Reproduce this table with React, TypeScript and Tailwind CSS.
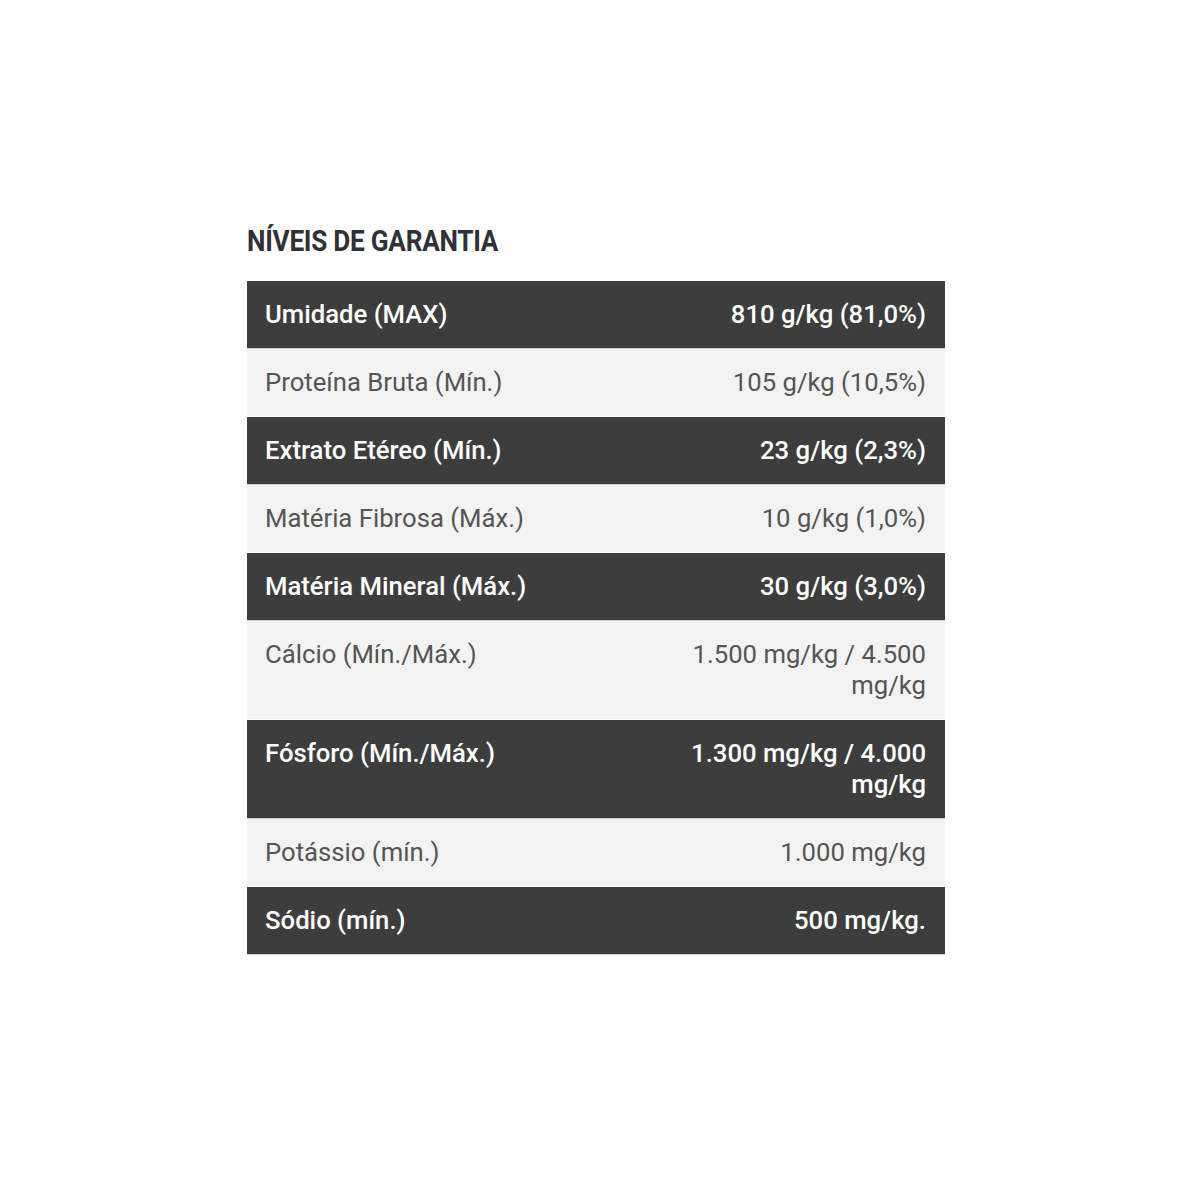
import React from 'react'

type Row = { label: string; value: string }

const rows: Row[] = [
  { label: 'Umidade (MAX)', value: '810 g/kg (81,0%)' },
  { label: 'Proteína Bruta (Mín.)', value: '105 g/kg (10,5%)' },
  { label: 'Extrato Etéreo (Mín.)', value: '23 g/kg (2,3%)' },
  { label: 'Matéria Fibrosa (Máx.)', value: '10 g/kg (1,0%)' },
  { label: 'Matéria Mineral (Máx.)', value: '30 g/kg (3,0%)' },
  { label: 'Cálcio (Mín./Máx.)', value: '1.500 mg/kg / 4.500 mg/kg' },
  { label: 'Fósforo (Mín./Máx.)', value: '1.300 mg/kg / 4.000 mg/kg' },
  { label: 'Potássio (mín.)', value: '1.000 mg/kg' },
  { label: 'Sódio (mín.)', value: '500 mg/kg.' },
]

export default function App() {
  return (
    <div className="min-h-[1200px] w-full bg-white font-['Roboto',sans-serif]">
      <div className="ml-[247px] w-[698px] pt-[222px]">
        <h2 className="origin-left scale-x-[0.872] text-[30px] font-bold leading-[38px] tracking-[-0.3px] text-[#2f3136] mb-[21px]">
          NÍVEIS DE GARANTIA
        </h2>
        <div className="flex flex-col">
          {rows.map((r, i) => {
            const dark = i % 2 === 0
            return (
              <div
                key={r.label}
                className={
                  dark
                    ? 'flex justify-between bg-[#3d3d3d] text-white font-medium border-b border-[#d0d0d0] py-[18px] pl-[18px] pr-[19px] text-[25.7px] leading-[31px]'
                    : 'flex justify-between bg-[#f3f3f3] text-[#555555] border-b border-white py-[18px] pl-[18px] pr-[19px] text-[25.7px] leading-[31px]'
                }
              >
                <span>{r.label}</span>
                <span className="w-[250px] text-right">{r.value}</span>
              </div>
            )
          })}
        </div>
      </div>
    </div>
  )
}
